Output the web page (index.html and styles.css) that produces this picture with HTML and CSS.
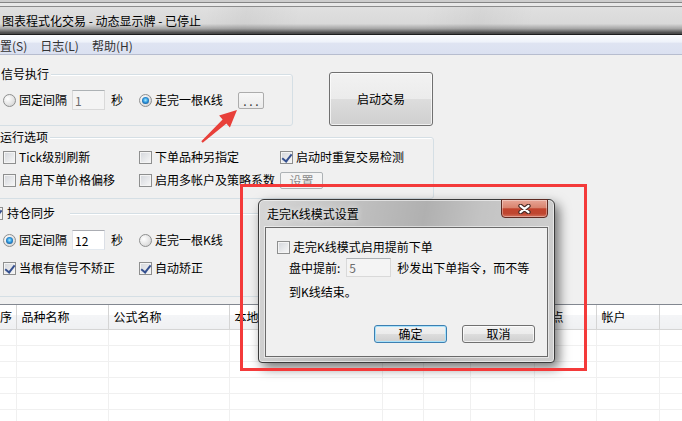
FILE: index.html
```html
<!DOCTYPE html>
<html lang="zh-CN">
<head>
  <meta charset="UTF-8" />
  <meta name="viewport" content="width=device-width, initial-scale=1.0"/>
  <title>图表程式化交易 - 动态显示牌 - 已停止</title>
  <link rel="stylesheet" href="styles.css">
</head>
<body>

  <div class="frame-top"></div>
  <div class="titlebar">图表程式化交易 - 动态显示牌 - 已停止</div>

  <nav class="menubar">
    <span>置(S)</span>
    <span>日志(L)</span>
    <span>帮助(H)</span>
  </nav>

  <main class="client">
    <div class="top-row">
      <div class="group group-signal">
        <div class="group-title">信号执行</div>
        <div class="row">
          <div class="cell">
            <span class="radio"></span><span class="text">固定间隔</span>
            <input class="field" value="1" disabled>
            <span class="unit">秒</span>
          </div>
          <div class="cell">
            <span class="radio on"></span><span class="text wide">走完一根K线</span>
            <button class="small-btn">. . .</button>
          </div>
        </div>
      </div>
      <button class="btn start-btn">启动交易</button>
    </div>

    <div class="group group-options">
      <div class="group-title">运行选项</div>
      <div class="row grid3">
        <label class="opt"><span class="check"></span>Tick级别刷新</label>
        <label class="opt"><span class="check"></span>下单品种另指定</label>
        <label class="opt"><span class="check on"></span>启动时重复交易检测</label>
      </div>
      <div class="row grid3">
        <label class="opt"><span class="check"></span>启用下单价格偏移</label>
        <label class="opt"><span class="check"></span>启用多帐户及策略系数</label>
        <button class="small-btn disabled">设置</button>
      </div>
    </div>

    <div class="group group-sync">
      <div class="group-title"><span class="check on"></span>持仓同步</div>
      <div class="row">
        <div class="cell">
          <span class="radio on"></span><span class="text">固定间隔</span>
          <input class="field" value="12">
          <span class="unit">秒</span>
        </div>
        <div class="cell">
          <span class="radio"></span><span class="text">走完一根K线</span>
        </div>
      </div>
      <div class="row grid2">
        <label class="opt"><span class="check on"></span>当根有信号不矫正</label>
        <label class="opt"><span class="check on"></span>自动矫正</label>
      </div>
    </div>

    <div class="list">
      <table>
        <colgroup>
          <col style="width:21px"><col style="width:92px"><col style="width:121px"><col style="width:153px"><col style="width:41px">
          <col style="width:47px"><col style="width:64px"><col style="width:62px"><col style="width:63px"><col style="width:60px">
        </colgroup>
        <thead>
          <tr>
            <th class="first">序</th><th>品种名称</th><th>公式名称</th><th>本地持仓</th><th>理论</th>
            <th>差额</th><th>最新价</th><th>滑点</th><th>帐户</th><th></th>
          </tr>
        </thead>
        <tbody>
          <tr><td></td><td></td><td></td><td></td><td></td><td></td><td></td><td></td><td></td><td></td></tr>
          <tr><td></td><td></td><td></td><td></td><td></td><td></td><td></td><td></td><td></td><td></td></tr>
          <tr><td></td><td></td><td></td><td></td><td></td><td></td><td></td><td></td><td></td><td></td></tr>
          <tr><td></td><td></td><td></td><td></td><td></td><td></td><td></td><td></td><td></td><td></td></tr>
          <tr><td></td><td></td><td></td><td></td><td></td><td></td><td></td><td></td><td></td><td></td></tr>
          <tr><td></td><td></td><td></td><td></td><td></td><td></td><td></td><td></td><td></td><td></td></tr>
        </tbody>
      </table>
    </div>
  </main>

  <!-- modal settings dialog over the main window -->
  <div class="dialog">
    <div class="dialog-title">
      <span>走完K线模式设置</span>
      <button class="close-btn">
        <svg width="13" height="10" viewBox="0 0 13 10">
          <path d="M2.5 1.8L10.5 8.2M10.5 1.8L2.5 8.2" stroke="#4a2b26" stroke-width="4.4" stroke-linecap="round"/>
          <path d="M2.5 1.8L10.5 8.2M10.5 1.8L2.5 8.2" stroke="#fff" stroke-width="2.2" stroke-linecap="round"/>
        </svg>
      </button>
    </div>
    <div class="dialog-body">
      <label class="opt dlg-opt"><span class="check"></span>走完K线模式启用提前下单</label>
      <div class="dlg-line">盘中提前:<input class="field dlg-field" value="5" disabled>秒发出下单指令，而不等</div>
      <div class="dlg-line dlg-line-end">到K线结束。</div>
      <div class="dlg-buttons">
        <button class="btn default-btn">确定</button>
        <button class="btn">取消</button>
      </div>
    </div>
  </div>

  <div class="highlight"></div>

  <svg class="arrow" width="50" height="45" viewBox="0 0 50 45">
    <polygon points="6.3,36.3 27.6,14.4 24.1,10.6 42,5 34.9,22.4 31.4,18.6 7.7,37.7" fill="#e8403a"/>
  </svg>

</body>
</html>
```

FILE: styles.css
```css
* {
  box-sizing: border-box;
}

body {
  margin: 0;
  width: 682px;
  height: 421px;
  overflow: hidden;
  position: relative;
  background: #f0f0f0;
  font-family: "Noto Sans CJK SC", "Liberation Sans", sans-serif;
  font-size: 12px;
  line-height: 16px;
  color: #000;
}

/* window chrome */
.frame-top {
  height: 7px;
  background: linear-gradient(#cdcdcd 0 2px, #858585 2px 3px, #e8e8e8 3px 6px, #8c8c8c 6px);
}

.titlebar {
  height: 28px;
  padding-left: 2px;
  line-height: 27px;
  font-size: 12px;
  background:
    linear-gradient(100deg, rgba(0,0,0,0) 30%, rgba(0,0,0,.04) 36%, rgba(0,0,0,0) 44%, rgba(0,0,0,0) 62%, rgba(0,0,0,.04) 70%, rgba(0,0,0,0) 78%),
    linear-gradient(#e0e0e0, #d9d9d9 62%, #a6a6a6 80%, #4a4a4a 96%);
  border-bottom: 1px solid #1c1c1c;
}

.menubar {
  display: flex;
  gap: 13px;
  height: 20px;
  padding-top: 1px;
  line-height: 19px;
  color: #333;
  background: linear-gradient(#fbfcfe, #eef2fa 38%, #dfe4f2 42%, #dbe1f1);
  border-bottom: 1px solid #b7bdcf;
}

/* group boxes */
.top-row {
  display: flex;
  align-items: flex-start;
  margin-top: 17px;
}

.group {
  margin-left: -20px;
  border: 1px solid #d5dfe5;
  border-radius: 3px;
  box-shadow: inset 1px 1px 0 #fff;
}

.group-title {
  display: flex;
  align-items: center;
  gap: 4px;
  width: max-content;
  height: 16px;
  margin: -9px 0 0 17px;
  padding: 0 2px;
  background: #f0f0f0;
}

.group-signal {
  width: 313px;
  height: 52px;
  margin-top: 2px;
}

.group-signal .group-title {
  margin-left: 18px;
}

.group-options {
  width: 454px;
  height: 62px;
  margin-top: 11px;
}

.group-sync {
  width: 454px;
  height: 84px;
  margin-top: 14px;
}

.group-sync .group-title {
  margin-left: 7px;
  padding-right: 15px;
}

.row {
  display: grid;
  grid-template-columns: 136px 1fr;
  align-items: center;
  height: 20px;
  margin-top: 8px;
  padding-left: 22px;
}

.group-sync .group-title + .row {
  margin-top: 9px;
}

.group-options .group-title + .row {
  margin-top: 2px;
}

.group-options .row + .row {
  margin-top: 3px;
}

.grid3 {
  grid-template-columns: 136px 141px 1fr;
}

.cell, .opt {
  display: flex;
  align-items: center;
}

.opt {
  gap: 3px;
}

.text {
  margin-left: 3px;
}

.text.wide {
  width: 83px;
}

.unit {
  margin-left: 6px;
}

/* controls */
.radio {
  position: relative;
  flex: none;
  width: 13px;
  height: 13px;
  border: 1px solid #8e8f8f;
  border-radius: 50%;
  background: radial-gradient(circle at 35% 35%, #fff, #e2e2e2 60%, #c9c9c9);
}

.radio.on::after {
  content: '';
  position: absolute;
  left: 2px;
  top: 2px;
  width: 7px;
  height: 7px;
  border-radius: 50%;
  background: radial-gradient(circle at 50% 45%, #a6f0ff 0, #2d93dc 45%, #0c3966 100%);
}

.check {
  position: relative;
  flex: none;
  width: 13px;
  height: 13px;
  border: 1px solid #8e8f8f;
  background: linear-gradient(135deg, #d3d6db, #f8f8f8);
  box-shadow: inset 0 0 0 1px #f4f4f4;
}

.check.on::after {
  content: '';
  position: absolute;
  left: 3px;
  top: 0;
  width: 4px;
  height: 8px;
  border: solid #35508f;
  border-width: 0 2px 2px 0;
  transform: rotate(38deg);
}

.field {
  width: 33px;
  height: 20px;
  margin: 0 0 0 5px;
  padding: 0 2px;
  font: 12px "Noto Sans CJK SC", "Liberation Sans", sans-serif;
  color: #000;
  background: #fff;
  border: 1px solid;
  border-color: #abadb3 #dbdfe6 #e3e9ef #e2e3ea;
  outline: none;
}

.field:disabled {
  color: #6d6d6d;
  background: #f4f4f4;
  border-color: #adb2b5 #d9d9d9 #d9d9d9 #d9d9d9;
}

.btn {
  padding: 0;
  font: inherit;
  color: #000;
  border: 1px solid #707070;
  border-radius: 3px;
  background: linear-gradient(#f2f2f2, #ebebeb 50%, #dddddd 50%, #cfcfcf);
  box-shadow: inset 0 0 0 1px rgba(255, 255, 255, .7);
}

.start-btn {
  width: 104px;
  height: 54px;
  margin-left: 36px;
}

.small-btn {
  width: 26px;
  height: 17px;
  padding: 0;
  font: inherit;
  line-height: 13px;
  color: #333;
  white-space: nowrap;
  border: 1px solid #acacac;
  border-radius: 2px;
  background: linear-gradient(#f7f7f7, #ebebeb);
}

.small-btn.disabled {
  width: 43px;
  color: #8a8a8a;
  border-color: #adb2b5;
  background: #f4f4f4;
}

/* list view */
.list {
  margin: 7px 0 0 -5px;
  height: 130px;
  border-top: 1px solid #828790;
  background: #fff;
}

table {
  width: 724px;
  table-layout: fixed;
  border-collapse: collapse;
}

th {
  height: 24px;
  padding: 1px 0 0 5px;
  text-align: left;
  font-weight: normal;
  white-space: nowrap;
  overflow: hidden;
  background: linear-gradient(#fff, #fff 40%, #f4f5f7 42%, #eff0f2);
  border-right: 1px solid #d5d5d5;
  border-bottom: 1px solid #d5d5d5;
}

td {
  height: 16px;
  padding: 0;
  border-right: 1px solid #f0f0f0;
  border-bottom: 1px solid #f0f0f0;
}

/* dialog */
.dialog {
  position: absolute;
  left: 258px;
  top: 199px;
  z-index: 2;
  display: flex;
  flex-direction: column;
  width: 297px;
  height: 164px;
  padding: 0 6px 5px;
  border: 1px solid #3b3b3b;
  border-radius: 6px 6px 4px 4px;
  background:
    linear-gradient(100deg, rgba(255,255,255,.3) 0%, rgba(255,255,255,0) 25%, rgba(0,0,0,.1) 52%, rgba(255,255,255,0) 70%, rgba(255,255,255,.15) 90%),
    #c4c4c4;
  box-shadow: inset 0 0 0 1px rgba(255, 255, 255, .55), 4px 5px 12px rgba(0, 0, 0, .55);
}

.dialog-title {
  display: flex;
  align-items: center;
  justify-content: space-between;
  height: 27px;
  padding-left: 2px;
  text-shadow: 0 0 6px rgba(255, 255, 255, .9);
}

.close-btn {
  align-self: flex-start;
  display: flex;
  align-items: center;
  justify-content: center;
  width: 47px;
  height: 19px;
  margin-top: -1px;
  padding: 0;
  border: 1px solid #5e2a22;
  border-radius: 0 0 4px 4px;
  background: linear-gradient(#e8a596, #d9846f 45%, #c2432d 52%, #bf4630 80%, #d4735f);
  box-shadow: inset 0 0 0 1px rgba(255, 255, 255, .35);
}

.dialog-body {
  flex: 1;
  background: #f0f0f0;
  border: 1px solid #6a6a6a;
  box-shadow: 0 0 0 1px rgba(255, 255, 255, .5);
}

.dlg-opt {
  height: 16px;
  margin: 11px 0 0 11px;
}

.dlg-line {
  display: flex;
  align-items: center;
  height: 19px;
  margin-top: 3px;
  padding-left: 23px;
}

.dlg-field {
  width: 45px;
  height: 19px;
  margin: 0 6px;
}

.dlg-line-end {
  height: 16px;
  margin-top: 7px;
}

.dlg-buttons {
  display: flex;
  justify-content: flex-end;
  gap: 15px;
  margin-top: 25px;
  padding-right: 12px;
}

.dlg-buttons .btn {
  width: 73px;
  height: 18px;
  line-height: 14px;
}

.default-btn {
  border-color: #3c7fb1;
  box-shadow: inset 0 0 0 1px #a9e2fb;
}

/* annotation marks */
.highlight {
  position: absolute;
  left: 240px;
  top: 184px;
  z-index: 3;
  width: 347px;
  height: 187px;
  border: 3px solid #f43a3a;
}

.arrow {
  position: absolute;
  left: 195px;
  top: 105px;
  z-index: 3;
}
```
